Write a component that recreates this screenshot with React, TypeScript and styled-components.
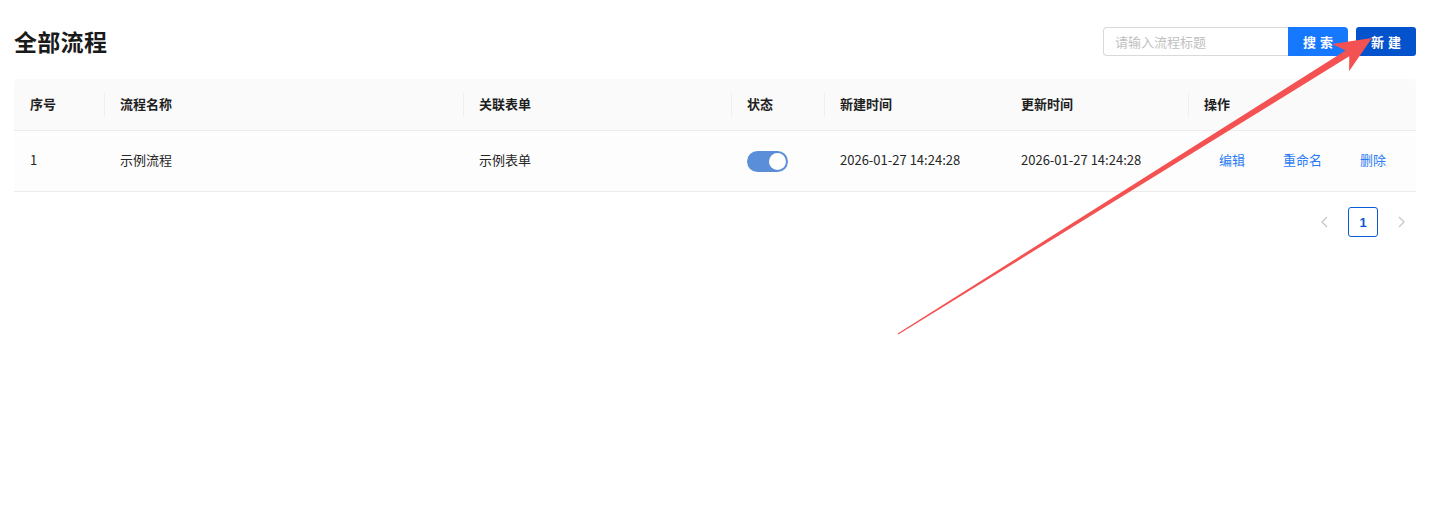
import React from "react";
import styled, { createGlobalStyle } from "styled-components";

const Global = createGlobalStyle`
  html, body { margin: 0; padding: 0; background: #ffffff; }
  body { font-family: "Noto Sans CJK SC", "Noto Sans", sans-serif; color: #1f1f1f; }
  * { box-sizing: border-box; }
`;

const Page = styled.div`
  position: relative;
  width: 1434px;
  height: 530px;
  padding: 27px 18px 0 14px;
  overflow: hidden;
`;

const TopBar = styled.div`
  display: flex;
  align-items: center;
  justify-content: space-between;
  height: 29px;
  margin-bottom: 23px;
`;

const Title = styled.h1`
  margin: 0;
  font-size: 23px;
  font-weight: 700;
  color: #1a1a1a;
  line-height: 29px;
  letter-spacing: 0.3px;
`;

const Tools = styled.div`
  display: flex;
  align-items: center;
  gap: 8px;
`;

const SearchGroup = styled.div`
  display: flex;
  height: 29px;
`;

const SearchInput = styled.input`
  width: 185px;
  height: 29px;
  border: 1px solid #d9d9d9;
  border-right: none;
  border-radius: 4px 0 0 4px;
  padding: 0 11px;
  font-family: inherit;
  font-size: 13px;
  color: #333;
  outline: none;
  &::placeholder { color: #bfbfbf; }
`;

const Btn = styled.button<{ $bg: string; $radius: string }>`
  height: 29px;
  width: 60px;
  border: none;
  border-radius: ${(p) => p.$radius};
  background: ${(p) => p.$bg};
  color: #fff;
  font-family: inherit;
  font-size: 13px;
  font-weight: 700;
  letter-spacing: 4px;
  padding: 0 0 0 4px;
  cursor: pointer;
`;

const COLS = "90px 359px 268px 93px 181px 183px 228px";

const Table = styled.div`
  width: 1402px;
`;

const HeadRow = styled.div`
  display: grid;
  grid-template-columns: ${COLS};
  height: 52px;
  background: #fafafa;
  border-bottom: 1px solid #ececec;
  border-radius: 4px 4px 0 0;
`;

const HeadCell = styled.div<{ $sep?: boolean }>`
  position: relative;
  display: flex;
  align-items: center;
  padding-left: 16px;
  padding-bottom: 2px;
  font-size: 13px;
  font-weight: 700;
  color: #1f1f1f;
  &::before {
    content: "";
    display: ${(p) => (p.$sep ? "block" : "none")};
    position: absolute;
    left: 0;
    top: 14px;
    height: 23px;
    width: 1px;
    background: #eeeeee;
  }
`;

const BodyRow = styled.div`
  display: grid;
  grid-template-columns: ${COLS};
  height: 61px;
  background: #fdfdfd;
  border-bottom: 1px solid #ececec;
`;

const Cell = styled.div`
  display: flex;
  align-items: center;
  padding-left: 16px;
  padding-bottom: 3px;
  font-size: 13px;
  color: #262626;
`;

const Switch = styled.div`
  width: 41px;
  height: 21px;
  border-radius: 11px;
  background: #5b8ed8;
  display: flex;
  align-items: center;
  justify-content: flex-end;
  padding-right: 2px;
  margin-top: 3px;
`;

const Knob = styled.span`
  width: 17px;
  height: 17px;
  border-radius: 50%;
  background: #fff;
`;

const Actions = styled.div`
  display: flex;
  align-items: center;
  gap: 8px;
`;

const LinkBtn = styled.button`
  border: none;
  background: transparent;
  padding: 0 15px;
  font-family: inherit;
  font-size: 13px;
  color: #2b7bf3;
  cursor: pointer;
`;

const Pager = styled.div`
  display: flex;
  justify-content: flex-end;
  align-items: center;
  gap: 8px;
  margin-top: 15px;
`;

const PageArrow = styled.div`
  width: 30px;
  height: 30px;
  display: flex;
  align-items: center;
  justify-content: center;
  color: #c4c4c4;
`;

const PageNum = styled.div`
  width: 30px;
  height: 30px;
  border: 1px solid #0a5bd3;
  border-radius: 3px;
  display: flex;
  align-items: center;
  justify-content: center;
  font-family: "Liberation Sans", Arial, sans-serif;
  font-size: 13px;
  font-weight: 700;
  color: #0a5bd3;
`;

const Overlay = styled.svg`
  position: absolute;
  left: 0;
  top: 0;
  pointer-events: none;
`;

const Chevron = ({ dir }: { dir: "l" | "r" }) => (
  <svg width="10" height="12" viewBox="0 0 10 12">
    <path
      d={dir === "l" ? "M7 1 L2 6 L7 11" : "M3 1 L8 6 L3 11"}
      fill="none"
      stroke="currentColor"
      strokeWidth="1.2"
    />
  </svg>
);

const Arrow = () => {
  const tail = { x: 898, y: 334 };
  const tip = { x: 1372, y: 38 };
  const dx = tip.x - tail.x;
  const dy = tip.y - tail.y;
  const len = Math.hypot(dx, dy);
  const ux = dx / len;
  const uy = dy / len;
  const px = -uy;
  const py = ux;
  const headLen = 37;
  const headW = 16;
  const shaftW = 3.5;
  const bx = tip.x - ux * headLen;
  const by = tip.y - uy * headLen;
  const nx = tip.x - ux * (headLen - 8);
  const ny = tip.y - uy * (headLen - 8);
  const pts = [
    [tail.x + px * 0.6, tail.y + py * 0.6],
    [nx + px * shaftW, ny + py * shaftW],
    [bx + px * headW, by + py * headW],
    [tip.x, tip.y],
    [bx - px * headW, by - py * headW],
    [nx - px * shaftW, ny - py * shaftW],
    [tail.x - px * 0.6, tail.y - py * 0.6],
  ]
    .map((p) => p.join(","))
    .join(" ");
  return (
    <Overlay width="1434" height="530" viewBox="0 0 1434 530">
      <polygon points={pts} fill="#f45252" />
    </Overlay>
  );
};

export default function App() {
  return (
    <>
      <Global />
      <Page>
        <TopBar>
          <Title>全部流程</Title>
          <Tools>
            <SearchGroup>
              <SearchInput placeholder="请输入流程标题" />
              <Btn $bg="#1677ff" $radius="0 4px 4px 0">搜索</Btn>
            </SearchGroup>
            <Btn $bg="#0553cc" $radius="3px">新建</Btn>
          </Tools>
        </TopBar>
        <Table>
          <HeadRow>
            <HeadCell>序号</HeadCell>
            <HeadCell $sep>流程名称</HeadCell>
            <HeadCell $sep>关联表单</HeadCell>
            <HeadCell $sep>状态</HeadCell>
            <HeadCell $sep>新建时间</HeadCell>
            <HeadCell>更新时间</HeadCell>
            <HeadCell $sep>操作</HeadCell>
          </HeadRow>
          <BodyRow>
            <Cell>1</Cell>
            <Cell>示例流程</Cell>
            <Cell>示例表单</Cell>
            <Cell>
              <Switch>
                <Knob />
              </Switch>
            </Cell>
            <Cell>2026-01-27 14:24:28</Cell>
            <Cell>2026-01-27 14:24:28</Cell>
            <Cell>
              <Actions>
                <LinkBtn>编辑</LinkBtn>
                <LinkBtn>重命名</LinkBtn>
                <LinkBtn>删除</LinkBtn>
              </Actions>
            </Cell>
          </BodyRow>
        </Table>
        <Pager>
          <PageArrow>
            <Chevron dir="l" />
          </PageArrow>
          <PageNum>1</PageNum>
          <PageArrow>
            <Chevron dir="r" />
          </PageArrow>
        </Pager>
        <Arrow />
      </Page>
    </>
  );
}
